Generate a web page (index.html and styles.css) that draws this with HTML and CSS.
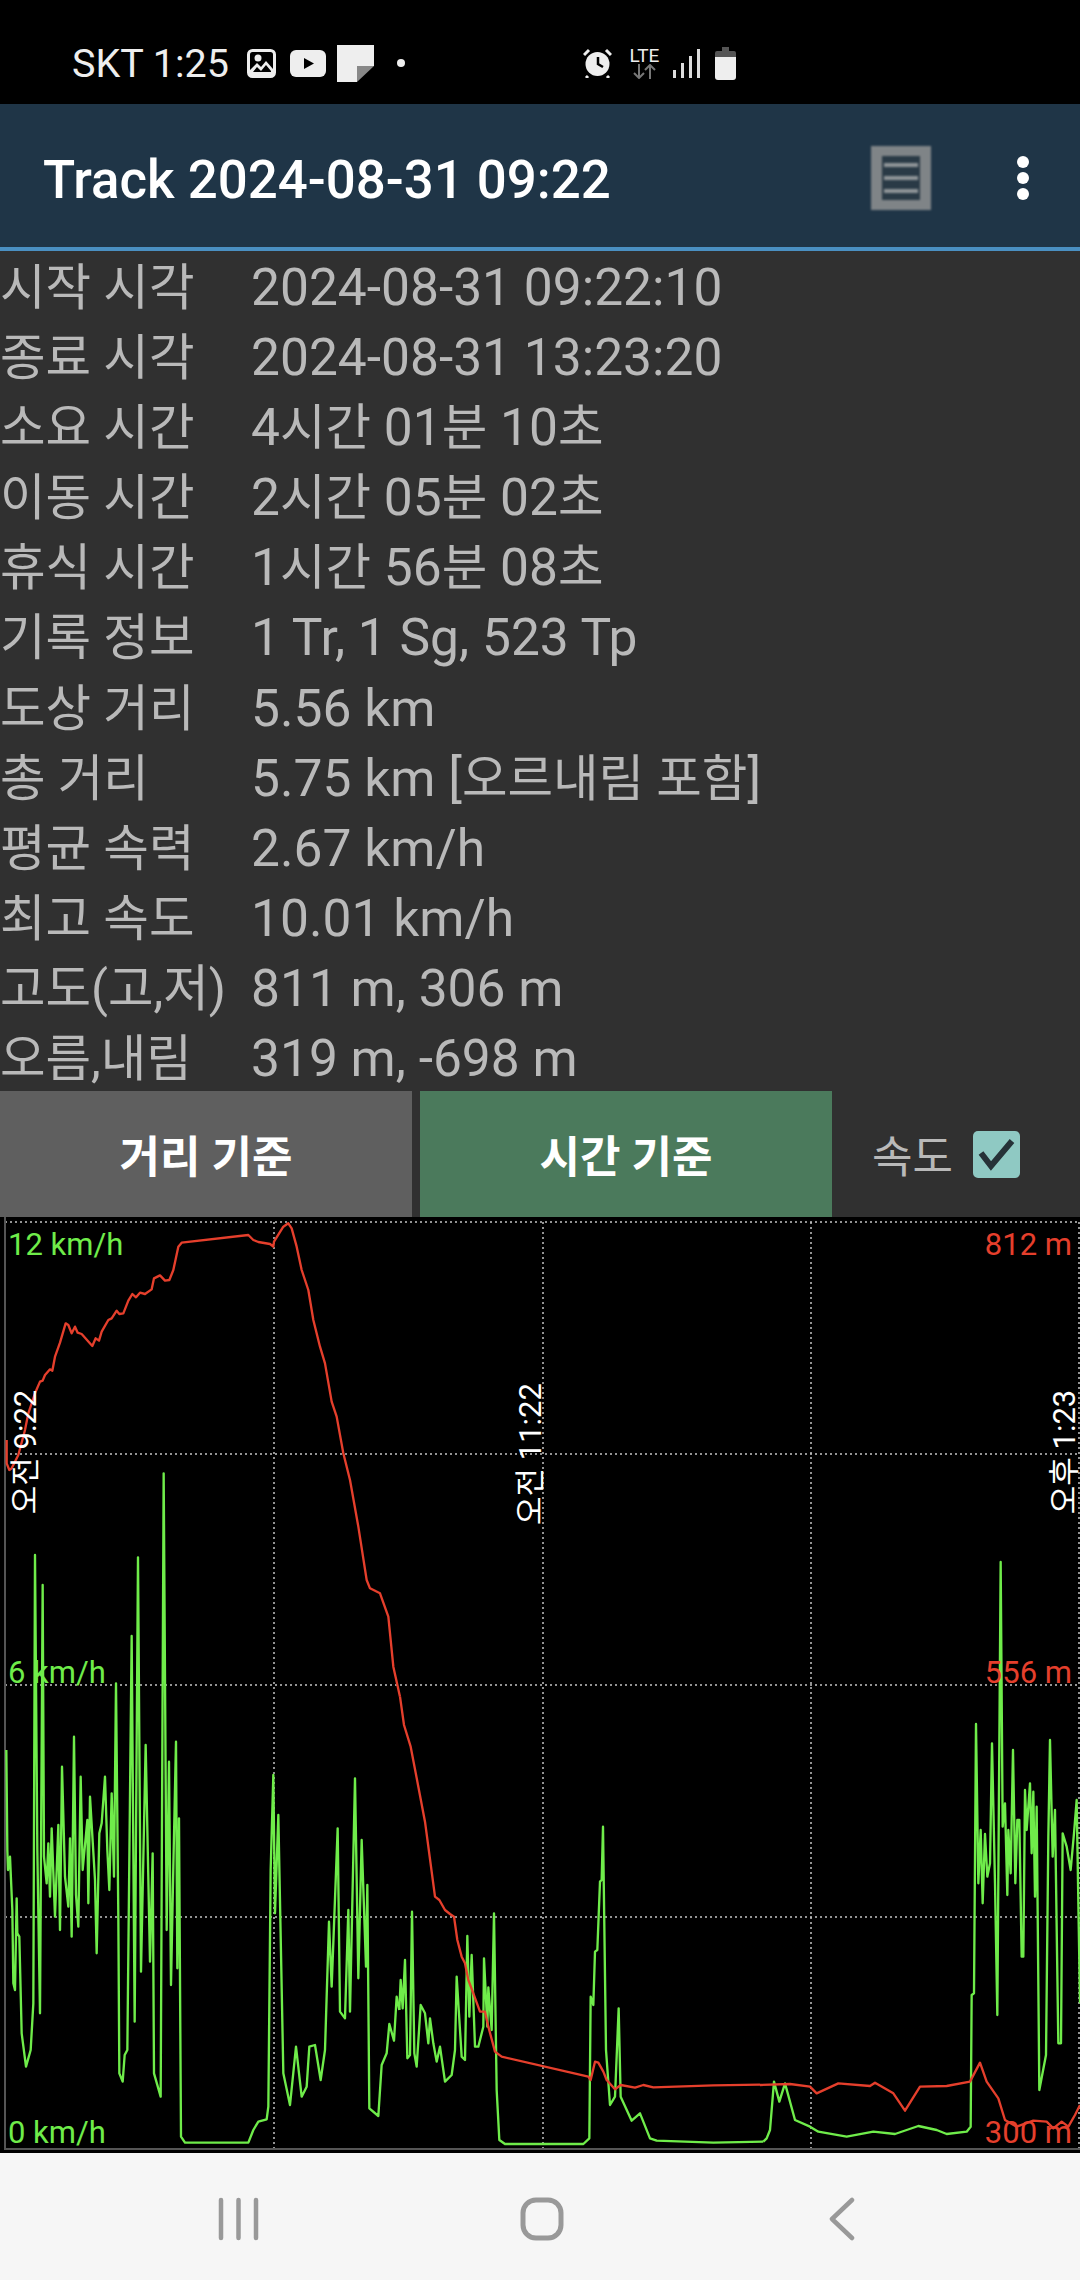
FILE: index.html
```html
<!DOCTYPE html>
<html lang="ko">
<head>
  <meta charset="UTF-8" />
  <title>Track 2024-08-31 09:22</title>
  <link rel="stylesheet" href="styles.css">
</head>
<body>

  <!-- Status bar -->
  <div class="status-bar">
    <span class="status-time">SKT 1:25</span>
    <svg class="icon-image" width="29" height="29" viewBox="0 0 29 29">
      <rect x="1.5" y="1.5" width="26" height="26" rx="4" fill="#000" stroke="#eee" stroke-width="3"/>
      <circle cx="11" cy="9" r="3.5" fill="#eee"/>
      <path d="M3 24 L3 21 L10 14 L14 18 L19 12 L26 20 L26 26 L3 26 Z" fill="#eee"/>
      <path d="M6 23 L10 18 L14 22 L19 16 L24 22 L24 23 Z" fill="#000"/>
    </svg>
    <svg class="icon-youtube" width="36" height="27" viewBox="0 0 36 27">
      <rect width="36" height="27" rx="6" fill="#eee"/>
      <path d="M14 8 L24 13.5 L14 19 Z" fill="#000"/>
    </svg>
    <svg class="icon-note" width="37" height="37" viewBox="0 0 37 37">
      <path d="M0 0 H37 V21 H20 V37 H0 Z" fill="#eee"/>
      <path d="M37 21 H20 V37 Z" fill="#888"/>
    </svg>
    <span class="status-dot"></span>
    <svg class="icon-alarm" width="29" height="30" viewBox="0 0 29 30">
      <circle cx="14.5" cy="16" r="12" fill="#eee"/>
      <path d="M15 9 V16 L20 19" fill="none" stroke="#000" stroke-width="2.5"/>
      <path d="M1 7 L6 2 M28 7 L23 2 M5 28 L3 30 M24 28 L26 30" stroke="#eee" stroke-width="3"/>
    </svg>
    <div class="lte">
      <span class="lte-text">LTE</span>
      <svg width="23" height="15" viewBox="0 0 23 15">
        <path d="M6 0 V14 M1 9 L6 14 L11 9 M17 15 V1 M12 6 L17 1 L22 6" fill="none" stroke="#777" stroke-width="2"/>
      </svg>
    </div>
    <svg class="icon-signal" width="27" height="29" viewBox="0 0 27 29">
      <rect x="0" y="21" width="3" height="8" fill="#ddd"/>
      <rect x="8" y="14" width="3" height="15" fill="#ddd"/>
      <rect x="16" y="7" width="3" height="22" fill="#ddd"/>
      <rect x="24" y="0" width="3" height="29" fill="#ddd"/>
    </svg>
    <svg class="icon-battery" width="21" height="33" viewBox="0 0 21 33">
      <path d="M7 0 H14 V4 H19 Q21 4 21 6 V10 H0 V6 Q0 4 2 4 H7 Z" fill="#555"/>
      <path d="M0 10 H21 V30 Q21 33 18 33 H3 Q0 33 0 30 Z" fill="#eee"/>
    </svg>
  </div>

  <!-- Toolbar -->
  <header class="toolbar">
    <h1>Track 2024-08-31 09:22</h1>
    <div class="list-btn">
      <span></span>
      <span></span>
      <span></span>
    </div>
    <div class="more-btn">
      <i></i><i></i><i></i>
    </div>
  </header>

  <!-- Track info -->
  <dl class="info">
    <dt>시작 시각</dt><dd>2024-08-31 09:22:10</dd>
    <dt>종료 시각</dt><dd>2024-08-31 13:23:20</dd>
    <dt>소요 시간</dt><dd>4<span class="ko">시간</span> 01<span class="ko">분</span> 10<span class="ko">초</span></dd>
    <dt>이동 시간</dt><dd>2<span class="ko">시간</span> 05<span class="ko">분</span> 02<span class="ko">초</span></dd>
    <dt>휴식 시간</dt><dd>1<span class="ko">시간</span> 56<span class="ko">분</span> 08<span class="ko">초</span></dd>
    <dt>기록 정보</dt><dd>1 Tr, 1 Sg, 523 Tp</dd>
    <dt>도상 거리</dt><dd>5.56 km</dd>
    <dt>총 거리</dt><dd>5.75 km [<span class="ko">오르내림 포함</span>]</dd>
    <dt>평균 속력</dt><dd>2.67 km/h</dd>
    <dt>최고 속도</dt><dd>10.01 km/h</dd>
    <dt>고도(고,저)</dt><dd>811 m, 306 m</dd>
    <dt>오름,내림</dt><dd>319 m, -698 m</dd>
  </dl>

  <!-- Chart mode buttons -->
  <div class="modes">
    <button class="mode">거리 기준</button>
    <button class="mode active">시간 기준</button>
    <label class="speed-toggle">
      속도
      <svg class="check" width="47" height="47" viewBox="0 0 47 47">
        <rect width="47" height="47" rx="5" fill="#8fc9c3"/>
        <path d="M8 22 L18 35 L39 10" fill="none" stroke="#263238" stroke-width="6"/>
      </svg>
    </label>
  </div>

  <!-- Chart -->
  <div class="chart">
    <svg class="plot" width="1080" height="936" viewBox="0 1217 1080 936">
      <g class="grid">
        <path d="M5 1222 H1080 M5 1454 H1080 M5 1685 H1080 M5 1917 H1080"/>
        <path d="M274 1222 V2149 M543 1222 V2149 M811 1222 V2149 M1079 1222 V2149"/>
      </g>
      <path class="frame" d="M5 1217 V2149 H1080"/>

      <!-- speed -->
      <g class="speed" transform="translate(0 1650) scale(.33333)">
        <polyline points="19,300 22,600 24,660 30,620 37,780 40,1000 45,1020 50,745 52,850 58,860 65,1150 78,1250 92,1200 100,1060 105,-285 112,600 120,1090 128,-195 132,620 140,700 145,580 150,740 155,535 165,800 175,525 180,840 186,350 195,680 205,770 210,565 215,860 222,260 228,735 235,830 242,380 248,660 262,510 265,760 270,440 285,690 290,910 298,550 305,520 315,380 322,600 328,720 335,430 342,680 348,100 355,800 358,1270 368,1295 374,1215 382,1200 395,-42 404,1115 414,-278 423,965 437,285 450,935 458,610 462,1270 482,1340 491,-530 500,840 507,335 513,1005 520,650 528,275 532,955 537,505 543,1460 555,1478 745,1478 760,1440 775,1415 800,1408 805,1370 812,660 820,375 825,790 835,495 850,1270 870,1365 888,1190 905,1340 920,1310 928,1190 945,1185 962,1290 975,1200 987,815 995,1010 1013,535 1020,1085 1035,1105 1045,780 1050,1085 1065,385 1075,985 1085,570 1098,950 1102,705 1108,1375 1135,1398 1145,1245 1160,1210 1168,1122 1182,1172 1190,1040 1198,1080"/>
      </g>
      <g class="speed" transform="translate(380 1650) scale(.33333)">
        <polyline points="58,1080 62,990 68,1075 75,930 82,1225 90,1215 96,785 103,1210 110,1250 122,1065 135,1090 145,1180 150,1105 160,1180 170,1235 180,1190 195,1295 215,1275 225,1200 230,980 245,1220 255,1230 262,858 268,1100 275,915 285,1190 295,1190 310,1130 312,925 322,1130 325,1012 335,1140 342,790 350,1320 358,1470 375,1482 610,1482 628,1465 632,1040 640,1065 645,905 652,900 660,695 665,690 669,530 678,1200 690,1365 705,1340 716,1075 722,1340 755,1412 780,1390 810,1465 830,1472 1000,1478 1150,1475"/>
      </g>
      <g class="speed" transform="translate(760 1650) scale(.33333)">
        <polyline points="10,1475 20,1465 30,1440 42,1295 58,1355 75,1300 105,1410 150,1430 175,1445 260,1460 340,1445 405,1452 475,1428 530,1440 560,1452 620,1445 632,1430 635,1035 642,1030 648,222 655,700 662,540 668,760 675,552 682,680 690,640 696,280 705,700 712,1095 722,-264 728,530 735,460 742,735 745,540 752,670 759,300 766,700 772,510 778,510 785,920 790,920 795,420 800,540 810,400 815,610 820,425 825,740 830,470 838,1320 858,1215 865,560 870,270 878,620 885,480 895,1180 903,1180 908,550 920,590 932,660 942,550 950,450 960,1060"/>
      </g>

      <!-- altitude -->
      <g class="alt" transform="translate(0 1210) scale(.33333)">
        <polyline points="20,690 20,760 28,780 35,775 55,735 75,660 85,610 105,550 120,515 128,512 135,495 150,478 157,482 165,440 180,398 197,340 205,345 215,370 225,350 233,368 245,372 277,408 287,385 297,392 305,365 325,330 335,325 350,302 358,312 370,310 385,272 397,252 408,262 420,248 435,252 455,238 462,205 480,196 495,212 508,210 520,180 535,110 545,98 745,75 760,90 775,96 810,102 820,110 822,95 850,50 865,40 875,55 890,110 905,180 925,240 940,330 960,410 975,460 995,575 1010,620 1030,730 1050,810 1075,950 1100,1110 1110,1135 1140,1150 1165,1220 1180,1370 1200,1460"/>
      </g>
      <g class="alt" transform="translate(380 1650) scale(.33333)">
        <polyline points="60,140 72,225 92,290 115,410 135,515 165,740 178,750 195,780 210,792 222,800 232,870 245,920 255,940 265,990 280,1030 300,1085 315,1085 325,1130 345,1205 365,1220 625,1280 632,1290 645,1235 655,1238 670,1265 680,1290 705,1318 722,1305 765,1313 790,1305 820,1312 1000,1306 1140,1304"/>
      </g>
      <g class="alt" transform="translate(760 1650) scale(.33333)">
        <polyline points="0,1305 90,1302 150,1310 170,1330 235,1300 330,1308 345,1298 400,1330 435,1382 480,1310 560,1308 630,1295 660,1238 680,1295 715,1345 735,1410 770,1430 820,1412 860,1415 880,1435 905,1415 925,1430 945,1395 960,1365"/>
      </g>
    </svg>

    <span class="axis-left tick-top">12 km/h</span>
    <span class="axis-left tick-mid">6 km/h</span>
    <span class="axis-left tick-bottom">0 km/h</span>
    <span class="axis-right tick-top">812 m</span>
    <span class="axis-right tick-mid">556 m</span>
    <span class="axis-right tick-bottom">300 m</span>

    <span class="time-label time-1">오전 9:22</span>
    <span class="time-label time-2">오전 11:22</span>
    <span class="time-label time-3">오후 1:23</span>
  </div>

  <!-- Navigation bar -->
  <nav class="nav-bar">
    <svg width="41" height="44" viewBox="0 0 41 44">
      <path d="M3 3 V41 M20.5 3 V41 M38 3 V41" stroke="#999" stroke-width="4.5" stroke-linecap="round"/>
    </svg>
    <svg class="nav-home" width="44" height="44" viewBox="0 0 44 44">
      <rect x="3" y="3" width="38" height="38" rx="13" fill="none" stroke="#999" stroke-width="5"/>
    </svg>
    <svg class="nav-back" width="26" height="44" viewBox="0 0 26 44">
      <path d="M23 3 L3 22 L23 41" fill="none" stroke="#999" stroke-width="4.5" stroke-linecap="round" stroke-linejoin="round"/>
    </svg>
  </nav>

</body>
</html>
```

FILE: styles.css
```css
/* Reset and base styles */
* {
  margin: 0;
  padding: 0;
  box-sizing: border-box;
}

body {
  width: 1080px;
  height: 2280px;
  overflow: hidden;
  background-color: #303030;
  font-family: Roboto, "Noto Sans CJK KR", sans-serif;
}

/* Status bar */
.status-bar {
  display: flex;
  align-items: center;
  height: 104px;
  padding: 22px 0 0 72px;
  background-color: #000;
  color: #eee;
}

.status-time {
  width: 175px;
  font-size: 39.5px;
}

.icon-youtube {
  margin-left: 14px;
}

.icon-note {
  margin-left: 11px;
}

.status-dot {
  width: 8px;
  height: 8px;
  margin-left: 23px;
  border-radius: 50%;
  background-color: #eee;
}

.icon-alarm {
  margin-left: 178px;
}

.lte {
  display: flex;
  flex-direction: column;
  align-items: center;
  width: 31px;
  margin-left: 17px;
}

.lte-text {
  font-size: 19px;
  line-height: 17px;
}

.icon-signal {
  margin-left: 13px;
}

.icon-battery {
  margin-left: 15px;
}

/* Toolbar */
.toolbar {
  display: flex;
  align-items: center;
  height: 147px;
  padding: 4px 0 0 43px;
  background-color: #1f3547;
  border-bottom: 4px solid #4a90c2;
  color: #fff;
}

.toolbar h1 {
  width: 828px;
  margin-top: 4px;
  font-size: 52.8px;
  font-weight: 500;
}

.list-btn {
  display: flex;
  flex-direction: column;
  justify-content: center;
  gap: 9px;
  width: 60px;
  height: 64px;
  padding: 0 2px;
  background-color: #2a3a46;
  border-style: solid;
  border-color: #7f8487;
  border-width: 10px 11px;
  filter: blur(1.2px);
}

.list-btn span {
  height: 4px;
  background-color: #8f9598;
}

.more-btn {
  display: flex;
  flex-direction: column;
  gap: 4px;
  margin-left: 86px;
}

.more-btn i {
  width: 12px;
  height: 12px;
  border-radius: 50%;
  background-color: #fff;
}

/* Track info */
.info {
  display: grid;
  grid-template-columns: 251px 1fr;
  grid-auto-rows: 70.1px;
  height: 840px;
  padding-top: 2px;
  align-items: baseline;
  font-size: 49.5px;
  line-height: 70px;
  color: #b9b9b9;
}

.info dd {
  font-size: 51.5px;
}

.info .ko {
  font-size: 49.5px;
}

/* Chart mode buttons */
.modes {
  display: flex;
  height: 126px;
}

.mode {
  width: 412px;
  margin-right: 8px;
  border: none;
  background-color: #5f5f5f;
  color: #fff;
  font-family: inherit;
  font-size: 44px;
  font-weight: 700;
}

.mode.active {
  margin-right: 0;
  background-color: #4b7a5c;
}

.speed-toggle {
  display: flex;
  align-items: center;
  gap: 20px;
  margin-left: 40px;
  color: #b9b9b9;
  font-size: 44px;
}

/* Chart */
.chart {
  position: relative;
  height: 936px;
  background-color: #000;
}

.plot {
  display: block;
}

.grid path {
  fill: none;
  stroke: #c4c4c4;
  stroke-width: 1.5;
  stroke-dasharray: 2 3;
}

.frame {
  fill: none;
  stroke: #555;
  stroke-width: 2;
}

.plot polyline {
  fill: none;
  stroke-width: 7;
  stroke-linejoin: round;
}

.speed polyline {
  stroke: #6fec4a;
}

.alt polyline {
  stroke: #e53f2c;
}

.axis-left,
.axis-right {
  position: absolute;
  font-size: 31px;
  line-height: 32px;
}

.axis-left {
  left: 8px;
  color: #6fec4a;
}

.axis-right {
  right: 8px;
  color: #e53f2c;
}

.tick-top {
  top: 12px;
}

.tick-mid {
  top: 440px;
}

.tick-bottom {
  top: 900px;
}

.time-label {
  position: absolute;
  color: #fff;
  font-size: 31px;
  line-height: 24px;
  white-space: nowrap;
  transform: translate(-50%, -50%) rotate(-90deg);
}

.time-1 {
  left: 26px;
  top: 235px;
}

.time-2 {
  left: 531px;
  top: 237px;
}

.time-3 {
  left: 1065px;
  top: 235px;
}

/* Navigation bar */
.nav-bar {
  display: flex;
  align-items: flex-start;
  height: 127px;
  padding: 44px 0 0 218px;
  background-color: #f6f6f6;
}

.nav-home {
  margin-left: 261px;
}

.nav-back {
  margin-left: 265px;
}
```
